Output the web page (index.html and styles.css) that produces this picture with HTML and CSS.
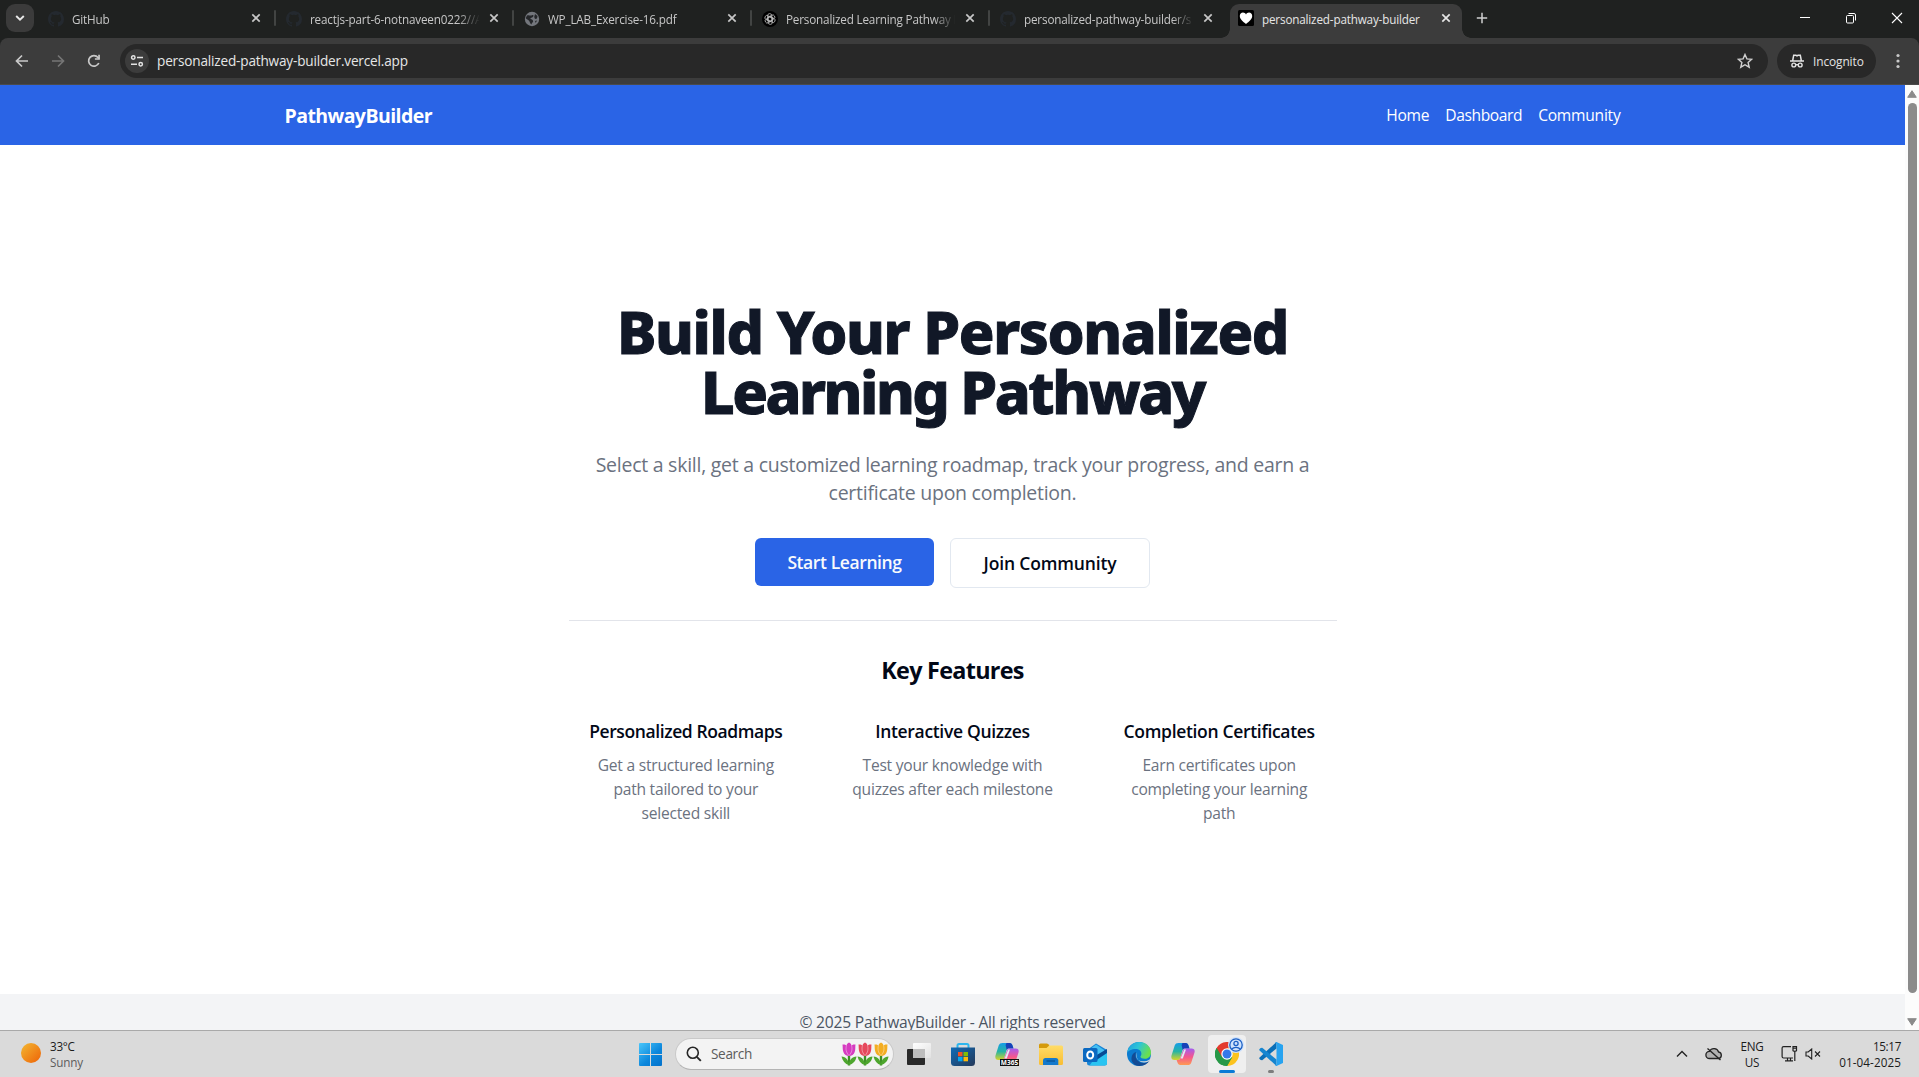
FILE: index.html
```
<!DOCTYPE html>
<html lang="en">
<head>
<meta charset="utf-8">
<title>personalized-pathway-builder</title>
<link rel="stylesheet" href="styles.css">
</head>
<body>
<svg class="defs" aria-hidden="true">
  <defs>
    <linearGradient id="sun" x1="0" y1="0" x2="1" y2="1"><stop offset="0" stop-color="#f3b833"/><stop offset="1" stop-color="#ee6206"/></linearGradient>
    <linearGradient id="win" gradientUnits="userSpaceOnUse" x1="0" y1="0" x2="22" y2="24"><stop offset="0" stop-color="#4bc8fb"/><stop offset=".6" stop-color="#0c87dc"/><stop offset="1" stop-color="#0473cc"/></linearGradient>
    <linearGradient id="cpA" x1="0" y1="0" x2="0" y2="1"><stop offset="0" stop-color="#159ce8"/><stop offset=".5" stop-color="#27b4a4"/><stop offset="1" stop-color="#d8d329"/></linearGradient>
    <linearGradient id="cpB" x1="0" y1="0" x2="0" y2="1"><stop offset="0" stop-color="#a35cf0"/><stop offset=".5" stop-color="#f4568f"/><stop offset="1" stop-color="#ff9a52"/></linearGradient>
    <linearGradient id="edA" x1="0" y1="0" x2="1" y2=".4"><stop offset="0" stop-color="#1f9bdf"/><stop offset=".5" stop-color="#2dc5d7"/><stop offset="1" stop-color="#6be04d"/></linearGradient>
    <linearGradient id="fold" x1="0" y1="0" x2="0" y2="1"><stop offset="0" stop-color="#ffdc68"/><stop offset="1" stop-color="#f9bd31"/></linearGradient>
    <linearGradient id="store" x1="0" y1="0" x2="1" y2="1"><stop offset="0" stop-color="#0f6cb8"/><stop offset="1" stop-color="#253858"/></linearGradient>
    <linearGradient id="glass" x1="0" y1="0" x2="1" y2="1"><stop offset="0" stop-color="#fff"/><stop offset="1" stop-color="#e2e2e2"/></linearGradient>
    <symbol id="x" viewBox="0 0 10 10"><path d="M1.300 1.300l7.400 7.400M8.700 1.300L1.300 8.700" stroke="currentColor" stroke-width="1.700"/></symbol>
    <symbol id="github" viewBox="0 0 16 16"><path fill="#24292f" d="M8 0C3.58 0 0 3.58 0 8c0 3.54 2.29 6.53 5.47 7.59.4.07.55-.17.55-.38 0-.19-.01-.82-.01-1.49-2.01.37-2.53-.49-2.69-.94-.09-.23-.48-.94-.82-1.13-.28-.15-.68-.52-.01-.53.63-.01 1.08.58 1.23.82.72 1.21 1.87.87 2.33.66.07-.52.28-.87.51-1.07-1.78-.2-3.64-.89-3.64-3.95 0-.87.31-1.59.82-2.15-.08-.2-.36-1.02.08-2.12 0 0 .67-.21 2.2.82a7.6 7.6 0 0 1 4 0c1.53-1.04 2.2-.82 2.2-.82.44 1.1.16 1.92.08 2.12.51.56.82 1.27.82 2.15 0 3.07-1.87 3.75-3.65 3.95.29.25.54.73.54 1.48 0 1.07-.01 1.93-.01 2.2 0 .21.15.46.55.38A8.01 8.01 0 0 0 16 8c0-4.42-3.58-8-8-8z"/></symbol>
    <symbol id="copilot" viewBox="0 0 24 24">
      <path d="M7.500 1h7.200c1.600 0 2.300 1 2.800 2.400l1 3.100h-4.600c-1.300 0-2 .6-2.400 2L9.200 16c-.5 1.500-1.200 2-2.600 2H3.400C.8 18-.1 16 .5 13.600l3.200-10C4.300 1.800 5.500 1 7.500 1z" fill="url(#cpA)"/>
      <path d="M11.500 1h3.200c1.600 0 2.300 1 2.800 2.400l1 3.100h-4.600c-1.100 0-1.800.4-2.200 1.400L10.600 3z" fill="#1741b8"/>
      <path d="M16.500 23H9.300c-1.600 0-2.300-1-2.800-2.400l-.9-2.700h1.100c1.400 0 2.100-.5 2.600-2L12 8.500c.4-1.400 1.100-2 2.400-2h6.200c2.600 0 3.500 1.600 2.900 3.900l-3.200 10c-.6 1.800-1.800 2.600-3.800 2.600z" fill="url(#cpB)"/>
      <path d="M13.200 7.500h1.800l-3.200 9H9.600z" fill="#e6e9f4"/>
    </symbol>
    <symbol id="tulip" viewBox="0 0 16 24">
      <path d="M8 12v11.500" stroke="#3f8f26" stroke-width="2.400"/>
      <path d="M8 23C4 22 1.500 19 .5 14.500 5 15 7.500 18 8 23zM8 23c0-5 3-8 7.500-8.500C15 19 12 22 8 23z" fill="#4ea62e"/>
      <path d="M1.500 2.500c2-.3 3 .2 4 1C6 2 7 1 8 .6 9.200 1 10 2 10.500 3.500c1-.8 2-1.300 4-1-.4 2.500.2 4.500-.8 7.500-.8 2.400-3 4-5.700 4s-4.800-1.600-5.600-4c-1-3-.5-5-.9-7.500z" fill="currentColor"/>
      <path d="M5.500 3.500c-1 3-.6 7 2.500 10M10.500 3.500c1 3 .6 7-2.500 10" stroke="#fff" stroke-opacity=".4" fill="none"/>
    </symbol>
  </defs>
</svg>

<header class="tabstrip">
  <div class="tabsearch"><svg width="12" height="12" viewBox="0 0 12 12"><path d="M2.200 4l3.800 3.700L9.800 4" fill="none" stroke="#e8e8e8" stroke-width="1.900"/></svg></div>
  <div class="tab"><svg class="fav"><use href="#github"/></svg><span class="title">GitHub</span><svg class="close"><use href="#x"/></svg></div>
  <div class="tab"><svg class="fav"><use href="#github"/></svg><span class="title">reactjs-part-6-notnaveen0222//A</span><svg class="close"><use href="#x"/></svg></div>
  <div class="tab"><svg class="fav" viewBox="0 0 16 16"><circle cx="8" cy="8" r="7.200" fill="#73767c"/><path d="M3 4.500c2-1 3 .5 5-.3 1.500-.8 2 .5 1 1.600C8 7 6.500 6.500 6.300 8c1.500.2 3 .8 2.800 2.400-.2 1.300-1.500 1.300-1.600 3.100-2-1.400-1.300-3-2.700-4.100C3.500 8.500 2.200 8 1.800 7zM11 3l2.500 2-.5 2.500-2 .5-.8-2zM11 10l2-.5-1.300 2.500z" fill="#25272a"/></svg><span class="title">WP_LAB_Exercise-16.pdf</span><svg class="close"><use href="#x"/></svg></div>
  <div class="tab"><svg class="fav" viewBox="0 0 16 16"><circle cx="8" cy="8" r="8" fill="#000"/><g fill="none" stroke="#bdbdbd" stroke-width=".8"><rect x="5.600" y="2.600" width="4.200" height="8" rx="2.100"/><rect x="5.600" y="2.600" width="4.200" height="8" rx="2.100" transform="rotate(60 8 8)"/><rect x="5.600" y="2.600" width="4.200" height="8" rx="2.100" transform="rotate(120 8 8)"/><rect x="5.600" y="2.600" width="4.200" height="8" rx="2.100" transform="rotate(180 8 8)"/><rect x="5.600" y="2.600" width="4.200" height="8" rx="2.100" transform="rotate(240 8 8)"/><rect x="5.600" y="2.600" width="4.200" height="8" rx="2.100" transform="rotate(300 8 8)"/></g></svg><span class="title">Personalized Learning Pathway B</span><svg class="close"><use href="#x"/></svg></div>
  <div class="tab last"><svg class="fav"><use href="#github"/></svg><span class="title">personalized-pathway-builder/s</span><svg class="close"><use href="#x"/></svg></div>
  <div class="tab active"><svg class="fav" viewBox="0 0 16 16"><rect width="16" height="16" rx="1.500" fill="#000"/><path d="M8 14C5 11.300 1.800 9 1.800 5.900 1.800 3.900 3.200 2.600 5 2.600c1.300 0 2.400.7 3 1.800.6-1.100 1.700-1.800 3-1.800 1.800 0 3.200 1.300 3.200 3.300C14.200 9 11 11.300 8 14z" fill="#fff"/></svg><span class="title">personalized-pathway-builder</span><svg class="close"><use href="#x"/></svg></div>
  <svg class="plus" viewBox="0 0 12 12"><path d="M6 .8v10.400M.8 6h10.400" stroke="#cfcfcf" stroke-width="1.500"/></svg>
  <div class="winbtns">
    <svg viewBox="0 0 12 12"><path d="M1 5.500h10" stroke="#fff"/></svg>
    <svg viewBox="0 0 12 12"><rect x="1.500" y="3.500" width="7" height="7.500" rx="1" fill="none" stroke="#fff"/><path d="M3.500 1.500h5.500a1.500 1.500 0 0 1 1.500 1.500v5.500" fill="none" stroke="#fff"/></svg>
    <svg viewBox="0 0 12 12"><path d="M1 1l10 10M11 1L1 11" stroke="#fff" stroke-width="1.100"/></svg>
  </div>
</header>

<div class="toolbar-wrap">
<div class="toolbar">
  <svg class="navicon" viewBox="0 0 14 14"><path d="M13 7H1.800M7 1.500L1.500 7 7 12.500" fill="none" stroke="#c9c9c9" stroke-width="1.700"/></svg>
  <svg class="navicon" viewBox="0 0 14 14"><path d="M1 7h11.200M7 1.500L12.500 7 7 12.500" fill="none" stroke="#757575" stroke-width="1.700"/></svg>
  <svg class="navicon" viewBox="0 0 14 14"><path d="M11.800 9A5.300 5.300 0 1 1 11 3.500l1 1.300" fill="none" stroke="#c9c9c9" stroke-width="1.700"/><path d="M12.900.8v5H7.900V4.300h3.300V.8z" fill="#c9c9c9"/></svg>
  <div class="omnibox">
    <span class="site"><svg width="14" height="14" viewBox="0 0 14 14"><g fill="none" stroke="#e3e3e3" stroke-width="1.500"><circle cx="3.300" cy="3.500" r="1.700"/><path d="M7 3.500h6M1 10.300h6"/><circle cx="10.700" cy="10.300" r="1.700"/></g></svg></span>
    <span class="url">personalized-pathway-builder.vercel.app</span>
    <svg class="star" viewBox="0 0 16 16"><path d="M8 1.500l1.900 4.400 4.800.4-3.600 3.200 1.100 4.700L8 11.700l-4.200 2.500 1.100-4.700L1.300 6.300l4.800-.4z" fill="none" stroke="#d0d0d0" stroke-width="1.400"/></svg>
  </div>
  <div class="chip"><svg width="14" height="14" viewBox="0 0 14 14"><path d="M0 7h14M2.700 6.500L3.700 1.300h2.300l1 .6 1-.6h2.300l1 5.200" fill="none" stroke="#e3e3e3" stroke-width="1.500"/><g fill="none" stroke="#e3e3e3" stroke-width="1.400"><circle cx="3.800" cy="11" r="1.900"/><circle cx="10.200" cy="11" r="1.900"/><path d="M5.700 10.700h2.600"/></g></svg><span>Incognito</span></div>
  <svg class="dots" viewBox="0 0 4 16"><g fill="#c9c9c9"><circle cx="2" cy="2.500" r="1.600"/><circle cx="2" cy="8" r="1.600"/><circle cx="2" cy="13.500" r="1.600"/></g></svg>
</div>
</div>

<div class="viewport">
  <div class="page">
    <nav class="nav">
      <div class="container">
        <strong class="brand">PathwayBuilder</strong>
        <div class="links"><a class="l1">Home</a><a class="l2">Dashboard</a><a class="l3">Community</a></div>
      </div>
    </nav>
    <main class="main">
      <section class="hero">
        <h1><span class="h1a">Build Your Personalized</span><br><span class="h1b">Learning Pathway</span></h1>
        <p class="lead">Select a skill, get a customized learning roadmap, track your progress, and earn a<br>certificate upon completion.</p>
        <div class="actions"><a class="btn primary">Start Learning</a><a class="btn outline">Join Community</a></div>
        <hr>
        <h2>Key Features</h2>
        <div class="features">
          <article><h3 class="wide">Personalized Roadmaps</h3><p>Get a structured learning<br>path tailored to your<br>selected skill</p></article>
          <article><h3>Interactive Quizzes</h3><p>Test your knowledge with<br>quizzes after each milestone</p></article>
          <article><h3>Completion Certificates</h3><p>Earn certificates upon<br>completing your learning<br>path</p></article>
        </div>
      </section>
    </main>
    <footer class="footer">© 2025 PathwayBuilder - All rights reserved</footer>
  </div>
  <div class="scrollbar">
    <svg class="arrow" viewBox="0 0 10 8"><path d="M5 .7L9.300 7.300H.7z" fill="#8b8b8b" stroke="#8b8b8b" stroke-linejoin="round"/></svg>
    <div class="thumb"></div>
    <svg class="arrow" viewBox="0 0 10 8"><path d="M5 7.300L9.300.7H.7z" fill="#8b8b8b" stroke="#8b8b8b" stroke-linejoin="round"/></svg>
  </div>
</div>

<div class="taskbar">
  <div class="weather">
    <svg width="20" height="20"><circle cx="10" cy="10" r="10" fill="url(#sun)"/></svg>
    <div><div class="temp">33°C</div><div class="sky">Sunny</div></div>
  </div>
  <div class="apps">
    <svg class="app" viewBox="0 0 24 24"><path d="M0 2q0-1 1-1H11v11H0zM12 1h10q1 0 1 1v10H12zM0 13h11v11H1q-1 0-1-1zM12 13h11v10q0 1-1 1H12z" fill="url(#win)"/></svg>
    <div class="search">
      <svg width="16" height="16" viewBox="0 0 16 16"><circle cx="6.800" cy="6.800" r="5.500" fill="none" stroke="#262626" stroke-width="1.600"/><path d="M10.800 10.800l4 4" stroke="#262626" stroke-width="1.900"/></svg>
      <span>Search</span>
      <svg class="tulip pink"><use href="#tulip"/></svg><svg class="tulip red"><use href="#tulip"/></svg><svg class="tulip gold"><use href="#tulip"/></svg>
    </div>
    <svg class="app" viewBox="0 0 24 24"><rect y="7" width="18" height="16" rx="1" fill="#292929"/><rect x="6" y="1" width="18" height="15" rx="1" fill="url(#glass)"/><path d="M6 7h12v9H6z" fill="#bdbdbd"/></svg>
    <svg class="app" viewBox="0 0 24 24"><path d="M6.500 6V3.500q0-1.500 1.500-1.500h8q1.500 0 1.500 1.500V6" fill="none" stroke="#2cb6ee" stroke-width="2"/><path d="M0 5.500h24v15q0 3.500-3.500 3.500h-17Q0 24 0 20.500z" fill="url(#store)"/><path d="M7 10h4.500v4.300H7z" fill="#f35325"/><path d="M12.500 10H17v4.300h-4.500z" fill="#81bc06"/><path d="M7 15h4.500v4.300H7z" fill="#05a6f0"/><path d="M12.500 15H17v4.300h-4.500z" fill="#ffba08"/></svg>
    <svg class="app" viewBox="0 0 24 24"><use href="#copilot" width="24" height="24"/><rect x="5" y="17" width="19" height="7" fill="#111"/><text class="m365" x="14.500" y="23" text-anchor="middle">M365</text></svg>
    <svg class="app" viewBox="0 0 24 24"><path d="M0 3q0-1.500 1.500-1.500h6.200q.9 0 1.600.8L10.500 4v4H0z" fill="#d49a0c"/><path d="M0 6h7.500l2.800-2.500h12.200Q24 3.500 24 5v16.500q0 1.500-1.500 1.500h-21Q0 23 0 21.500z" fill="url(#fold)"/><path d="M4 23v-4.500Q4 16 6.500 16h10.300q2.500 0 2.500 2.500V23z" fill="#1479cc"/><path d="M7.500 19h8.500" stroke="#0a4f91" stroke-width="1.200"/></svg>
    <svg class="app" viewBox="0 0 24 24"><path d="M4 8l9-6.500L24 8v13q0 2.500-2.500 2.500h-15Q4 23.500 4 21z" fill="#1785d6"/><path d="M6 8l7-5.500L21 8v6H6z" fill="#44bff2"/><path d="M12 16l12-8v13q0 2.500-2.500 2.500h-15z" fill="#29c4f1"/><path d="M12 14l12-7v4l-12 8z" fill="#064b95"/><rect y="6" width="14.500" height="14" rx="1.500" fill="#0b69c1"/><ellipse cx="7.200" cy="13" rx="3" ry="3.600" fill="none" stroke="#fff" stroke-width="2"/></svg>
    <svg class="app" viewBox="0 0 24 24"><circle cx="12" cy="12" r="12" fill="#0b7bd0"/><path d="M0 11C1 4.500 6 0 12 0c7 0 12 4.800 12 10.500 0 4-3 6.300-6.300 6.300-2.500 0-4.300-.9-4.300-2 0-.8 1-1.200 1-3C14.400 9 12 7 8.500 7 4.500 7 1 9 0 11z" fill="url(#edA)"/><path d="M9 10c-2 5 1.500 11 7.500 11 2.500 0 4.700-1 6-2.200C20.600 21.900 17 24 12.500 24 7 24 4 19.500 4.500 16 4.800 13 6.500 10.500 9 10z" fill="#134b94"/><path d="M10.200 10.500c-1.700 2-1.400 5.600 1.300 7.500 2.500 1.800 7.300 2 11.500-.8-.5.800-.9 1.500-1.500 2.200-6 3.300-12.800-1-11.900-7.400z" fill="#d9d9d9"/></svg>
    <svg class="app" viewBox="0 0 24 24"><use href="#copilot" width="24" height="24"/></svg>
    <div class="app chromebox">
      <svg width="24" height="24" viewBox="0 0 24 24"><path d="M12 12L1.600 6A12 12 0 0 1 22.400 6z" fill="#e33b2e"/><path d="M12 12L22.400 6A12 12 0 0 1 12 24z" fill="#fcc31e"/><path d="M12 12v12A12 12 0 0 1 1.600 6z" fill="#279847"/><path d="M12 6h10.400L17.200 15z" fill="#fcc31e"/><path d="M17.200 15L12 24 6.800 15z" fill="#279847"/><path d="M6.800 15L1.600 6 12 6z" fill="#e33b2e"/><path d="M6.800 15L1.600 6A12 12 0 0 0 12 24l5.200-9z" fill="#279847"/><circle cx="12" cy="12" r="5.700" fill="#fff"/><circle cx="12" cy="12" r="4.500" fill="#3478e8"/></svg>
      <svg class="badge" viewBox="0 0 16 16"><circle cx="8" cy="8" r="8" fill="#cfe2fc"/><circle cx="8" cy="8" r="6.200" fill="none" stroke="#1b5fc4" stroke-width="1.300"/><circle cx="8" cy="6.500" r="2.100" fill="none" stroke="#1b5fc4" stroke-width="1.300"/><path d="M3.800 12c2-2.300 6.400-2.300 8.400 0" fill="none" stroke="#1b5fc4" stroke-width="1.300"/></svg>
      <i class="run"></i>
    </div>
    <div class="app vscode">
      <svg width="24" height="24" viewBox="0 0 24 24"><path d="M17.500 0v6.500L3.200 18.200 1.700 18 .3 16.700v-1z" fill="#0a6fb8"/><path d="M.3 8.300v-1L1.700 6l1.500-.2L17.500 17.500V24z" fill="#1585d0"/><path d="M17.500 0L24 3v18l-6.500 3q-1 0-1.500-1 1.500.5 1.500-1V2q0-1.500-1.500-1 .5-1 1.500-1z" fill="#27a3f0"/></svg>
      <i class="idle"></i>
    </div>
  </div>
  <div class="tray">
    <svg class="chev" viewBox="0 0 12 8"><path d="M1 6.500l5-5 5 5" fill="none" stroke="#222" stroke-width="1.400"/></svg>
    <svg class="cloud" viewBox="0 0 18 14"><path d="M4.500 11.500a3.600 3.600 0 0 1 0-7.200A5 5 0 0 1 13.600 5a3.300 3.300 0 0 1 0 6.500z" fill="#b0b0b0" stroke="#222" stroke-width="1.300"/><path d="M2.500 1.500l13 11.500" stroke="#222" stroke-width="1.400"/></svg>
    <div class="lang"><div>ENG</div><div>US</div></div>
    <svg class="net" viewBox="0 0 17 17"><g fill="none" stroke="#222" stroke-width="1.200"><path d="M10 1.600H2.600Q1.100 1.600 1.100 3v8.500q0 1.500 1.500 1.500H12M6.500 13v2.500M9.500 13v2.500M4 15.800h8"/><path d="M12 1.500h3.500v4.300q-1.750 1.200-3.500 0zM12 3.200h3.500M13.800 6.500V16"/></g></svg>
    <svg class="vol" viewBox="0 0 16 12"><g fill="none" stroke="#222" stroke-width="1.100"><path d="M1 4v4h2.200L6.700 11V1L3.200 4z"/><path d="M10 3.500l5 5M15 3.500l-5 5"/></g></svg>
    <div class="clock"><div class="time">15:17</div><div class="date">01-04-2025</div></div>
  </div>
</div>
</body>
</html>
```
FILE: styles.css
```
* { box-sizing: border-box; margin: 0; padding: 0; }
html, body { height: 100%; overflow: hidden; }
body { display: flex; flex-direction: column; font-family: "Open Sans", "Noto Sans", sans-serif; background: #fff; }
svg { display: block; flex: none; }
.defs { position: absolute; width: 0; height: 0; }

/* Tab strip */
.tabstrip { display: flex; height: 38px; flex: none; background: #1f2120; }
.tabsearch { display: flex; align-items: center; justify-content: center; width: 28px; height: 28px; margin: 4px 4px 0 6px; border-radius: 9px; background: #3b3b3b; }
.tab { display: flex; align-items: center; width: 238px; height: 28px; margin-top: 5px; padding-left: 10px; color: #c7c7c7; position: relative; }
.tab:not(.last):not(.active)::after { content: ""; width: 2px; height: 16px; margin-left: 13px; background: #424443; border-radius: 1px; margin-top: -2px; }
.fav { width: 16px; height: 16px; margin-top: -1px; }
.title { flex: none; width: 169px; margin: 0 0 0 8px; overflow: hidden; white-space: nowrap; font-size: 11.700px; line-height: 18px; letter-spacing: -0.170px; -webkit-mask-image: linear-gradient(90deg, #000 148px, transparent 170px); mask-image: linear-gradient(90deg, #000 148px, transparent 170px); }
.close { width: 10px; height: 10px; margin: -2px 0 0 10px; }
.tab.active { width: 232px; height: 34px; margin: 4px 0 0 2px; padding: 0 0 5px 8px; border-radius: 9px 9px 0 0; background: #3c3c3c; color: #e6e6e6; }
.tab.active::before, .tab.active::after { content: ""; position: absolute; bottom: 0; width: 9px; height: 9px; }
.tab.active::before { left: -9px; background: radial-gradient(circle at 0 0, transparent 8.500px, #3c3c3c 9px); }
.tab.active::after { right: -9px; background: radial-gradient(circle at 100% 0, transparent 8.500px, #3c3c3c 9px); }
.tab.active .title { -webkit-mask-image: none; mask-image: none; }
.plus { width: 12px; height: 12px; margin: 12px 0 0 14px; }
.winbtns { display: flex; gap: 34px; margin: 12px 16px 0 auto; }
.winbtns svg { width: 12px; height: 12px; }

/* Address bar */
.toolbar-wrap { flex: none; background: #1f2120; }
.toolbar { display: flex; align-items: center; height: 47px; padding: 0 19px 1px 15px; border-radius: 8px 8px 0 0; background: linear-gradient(#3c3c3c 46px, #4a4a4a 46px); }
.navicon { width: 14px; height: 14px; margin-right: 22px; }
.omnibox { display: flex; align-items: center; flex: none; width: 1648px; height: 34px; margin-left: -3px; padding: 0 15px 0 5px; border-radius: 17px; background: #282828; }
.site { display: flex; align-items: center; justify-content: center; width: 24px; height: 24px; border-radius: 50%; background: #3c3c3c; }
.url { margin-left: 8px; font-size: 13.600px; line-height: 20px; letter-spacing: -0.180px; color: #e6e6e6; }
.star { width: 16px; height: 16px; margin-left: auto; }
.chip { display: flex; align-items: center; flex: none; gap: 9px; width: 99px; height: 34px; margin-left: 9px; padding-left: 13px; border-radius: 17px; background: #282828; color: #e3e3e3; font-size: 11.900px; letter-spacing: -0.100px; }
.dots { width: 4px; height: 16px; margin-left: 20px; }

/* Web page */
.viewport { display: flex; flex: none; height: 945px; overflow: hidden; }
.page { width: 1905px; }
.nav { height: 60px; background: #2a64e6; color: #fff; }
.container { display: flex; align-items: center; justify-content: space-between; width: 1336px; height: 60px; margin: 0 auto; }
.brand { font-size: 19.500px; line-height: 28px; font-weight: 700; letter-spacing: -0.570px; padding-top: 1px; }
.links { display: flex; gap: 16px; font-size: 15.600px; line-height: 24px; }
.l1 { letter-spacing: -0.250px; }
.l2 { letter-spacing: -0.400px; }
.l3 { letter-spacing: -0.240px; }
.main { display: flex; align-items: center; justify-content: center; height: 849px; }
.hero { width: 768px; text-align: center; }
h1 { margin-bottom: 33px; padding-top: 3px; height: 120px; font: 800 59px/60px "Noto Sans", sans-serif; color: #111827; white-space: nowrap; -webkit-text-stroke: 1px #111827; }
.h1a { letter-spacing: -1.360px; }
.h1b { letter-spacing: -2.450px; }
.lead { margin-bottom: -1px; font-size: 19.500px; line-height: 28px; letter-spacing: -0.256px; color: #6b7280; white-space: nowrap; }
.actions { display: flex; align-items: flex-start; justify-content: center; gap: 16px; margin-top: 32px; }
.btn { padding: 10px 0; border-radius: 6px; font-size: 17.500px; line-height: 28px; font-weight: 600; text-align: center; }
.primary { width: 179px; background: #2a64e6; color: #f8fafc; letter-spacing: -0.400px; }
.outline { width: 200px; border: 1px solid #e2e8f0; color: #020817; letter-spacing: -0.160px; }
hr { margin: 32px 0; border: 0; border-top: 1px solid #e2e4ea; }
h2 { height: 32px; margin-bottom: 16px; padding-top: 1px; font-size: 23.400px; line-height: 32px; font-weight: 700; letter-spacing: -0.720px; color: #020817; }
.features { display: grid; grid-template-columns: repeat(3, 1fr); gap: 32px; }
.features article { padding: 16px 0; white-space: nowrap; }
h3 { margin-bottom: 8px; font-size: 17.500px; line-height: 28px; font-weight: 600; letter-spacing: -0.320px; color: #020817; }
h3.wide { letter-spacing: -0.400px; }
.features p { font-size: 15.600px; line-height: 24px; letter-spacing: -0.230px; color: #6b7280; }
.footer { height: 56px; padding-top: 16px; background: #f3f4f6; color: #4b5563; text-align: center; font-size: 15.600px; line-height: 24px; letter-spacing: -0.200px; }
.scrollbar { display: flex; flex-direction: column; align-items: center; justify-content: space-between; width: 14px; padding: 5px 0 4px; background: #fcfcfc; }
.arrow { width: 10px; height: 8px; }
.thumb { width: 9px; height: 890px; margin: 5px 0 auto; border-radius: 5px; background: #8b8b8b; }

/* Taskbar */
.taskbar { display: flex; flex: none; height: 47px; border-top: 1px solid #a9a9a9; background: #dadada; font-size: 11.700px; line-height: 16px; color: #1b1b1b; }
.weather { display: flex; gap: 9px; width: 639px; padding: 12px 0 0 21px; }
.weather > div { margin-top: -5px; }
.temp { letter-spacing: -0.300px; }
.sky { color: #5c5c5c; letter-spacing: -0.150px; }
.apps { display: flex; align-items: flex-start; gap: 20px; padding-top: 11px; }
.app { width: 24px; height: 24px; }
.search { display: flex; align-items: center; width: 219px; height: 32px; margin: -4px -7px 0 -8px; padding: 0 4px 0 10px; border: 1px solid #c9c9c9; border-bottom-color: #b4b4b4; border-radius: 16px; background: #f3f3f3; }
.search span { margin: 0 auto 0 9px; font-size: 13.600px; letter-spacing: -0.350px; color: #5c5c5c; }
.tulip { width: 16px; height: 24px; }
.pink { color: #d63bc0; }
.red { color: #e6485c; }
.gold { color: #f3ad22; }
.m365 { font: 700 6.500px "Open Sans", sans-serif; fill: #fff; }
.chromebox, .vscode { position: relative; }
.chromebox { width: 38px; height: 38px; margin: -7px -7px 0; padding: 7px; border-radius: 4px; background: #efefef; }
.badge { position: absolute; left: 20px; top: 2px; width: 16px; height: 16px; }
.run { position: absolute; left: 11px; bottom: 0; width: 16px; height: 3px; border-radius: 2px; background: #0a7bd6; }
.idle { position: absolute; left: 9px; bottom: -7px; width: 6px; height: 3px; border-radius: 2px; background: #7d7d7d; }
.tray { display: flex; align-items: center; margin-left: auto; padding: 0 18px 1px 0; }
.chev { width: 12px; height: 8px; }
.cloud { width: 18px; height: 14px; margin-left: 17px; }
.lang { width: 24px; margin-left: 17px; text-align: center; letter-spacing: -0.250px; }
.net { width: 17px; height: 17px; margin-left: 17px; }
.vol { width: 16px; height: 12px; margin-left: 7px; }
.clock { width: 64px; margin-left: 16px; text-align: right; white-space: nowrap; }
.time { letter-spacing: -0.350px; }
.date { letter-spacing: 0.080px; }
```
